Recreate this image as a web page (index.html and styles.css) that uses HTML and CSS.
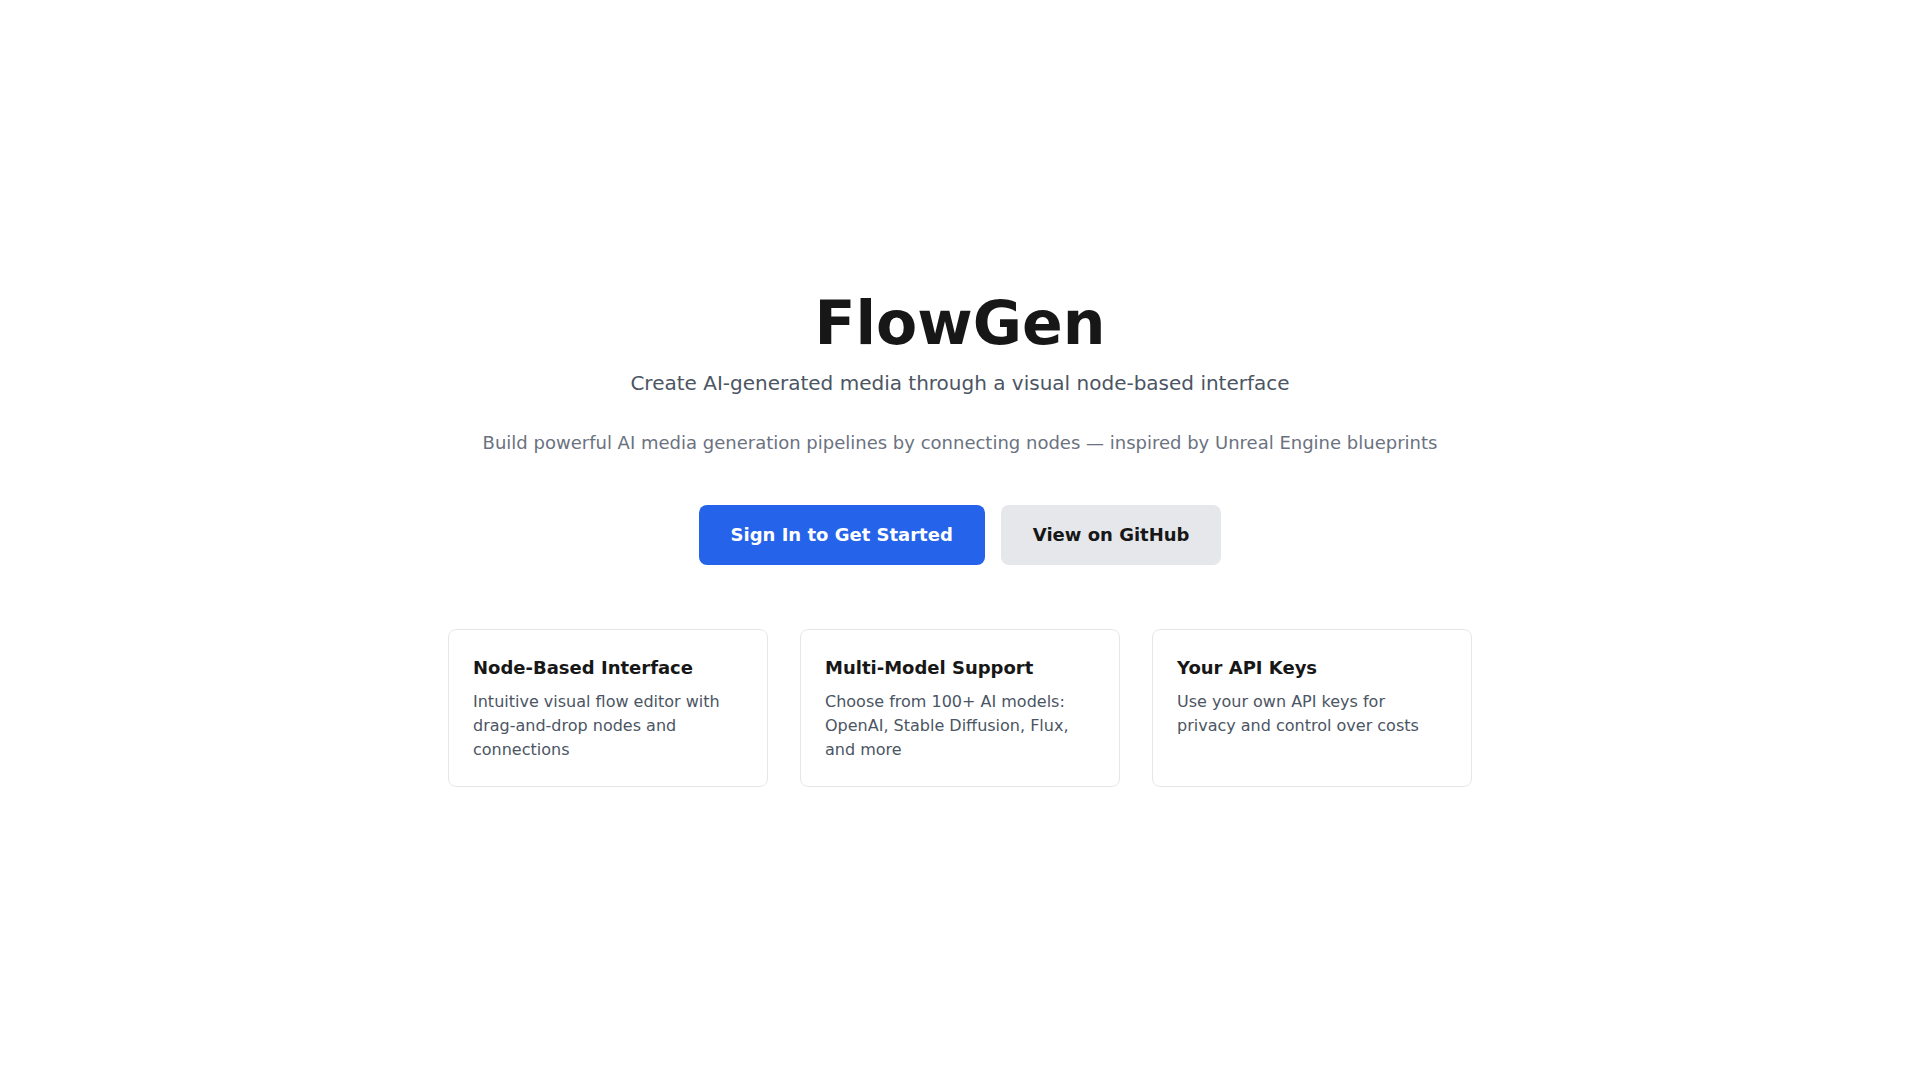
FILE: index.html
```html
<!DOCTYPE html>
<html lang="en">
<head>
<meta charset="utf-8">
<title>FlowGen</title>
<link rel="stylesheet" href="styles.css">
</head>
<body>
<main class="page">
  <div class="hero">
    <h1 class="title">FlowGen</h1>
    <p class="subtitle">Create AI-generated media through a visual node-based interface</p>
    <p class="description">Build powerful AI media generation pipelines by connecting nodes — inspired by Unreal Engine blueprints</p>
    <div class="actions">
      <a class="btn btn-primary" href="#">Sign In to Get Started</a>
      <a class="btn btn-secondary" href="#">View on GitHub</a>
    </div>
    <div class="features">
      <div class="card">
        <h3 class="card-title">Node-Based Interface</h3>
        <p class="card-text">Intuitive visual flow editor with drag-and-drop nodes and connections</p>
      </div>
      <div class="card">
        <h3 class="card-title">Multi-Model Support</h3>
        <p class="card-text">Choose from 100+ AI models: OpenAI, Stable Diffusion, Flux, and more</p>
      </div>
      <div class="card">
        <h3 class="card-title">Your API Keys</h3>
        <p class="card-text">Use your own API keys for privacy and control over costs</p>
      </div>
    </div>
  </div>
</main>
</body>
</html>
```
FILE: styles.css
```css
* {
  box-sizing: border-box;
}

html, body {
  margin: 0;
  padding: 0;
  background: #ffffff;
}

body {
  font-family: "DejaVu Sans", sans-serif;
  color: #171717;
}

.page {
  min-height: 100vh;
  display: flex;
  align-items: center;
  justify-content: center;
}

.hero {
  width: 1024px;
  display: flex;
  flex-direction: column;
  align-items: center;
  text-align: center;
}

.title {
  margin: 0 0 16px;
  font-size: 60px;
  line-height: 60px;
  font-weight: 700;
  color: #171717;
}

.subtitle {
  margin: 0 0 32px;
  font-size: 20px;
  line-height: 28px;
  color: #4b5563;
}

.description {
  margin: 0 0 48px;
  font-size: 18px;
  line-height: 28px;
  color: #6b7280;
}

.actions {
  display: flex;
  gap: 16px;
  margin-bottom: 64px;
}

.btn {
  display: inline-block;
  padding: 16px 32px;
  font-size: 18px;
  line-height: 28px;
  font-weight: 700;
  border-radius: 8px;
  text-decoration: none;
}

.btn-primary {
  background: #2563eb;
  color: #ffffff;
}

.btn-secondary {
  background: #e5e7eb;
  color: #171717;
}

.features {
  width: 100%;
  display: grid;
  grid-template-columns: repeat(3, 1fr);
  gap: 32px;
  text-align: left;
}

.card {
  padding: 24px;
  border: 1px solid #e5e7eb;
  border-radius: 8px;
  background: #ffffff;
}

.card-title {
  margin: 0 0 8px;
  font-size: 18px;
  line-height: 28px;
  font-weight: 700;
  color: #171717;
}

.card-text {
  margin: 0;
  font-size: 16px;
  line-height: 24px;
  color: #4b5563;
}
```
